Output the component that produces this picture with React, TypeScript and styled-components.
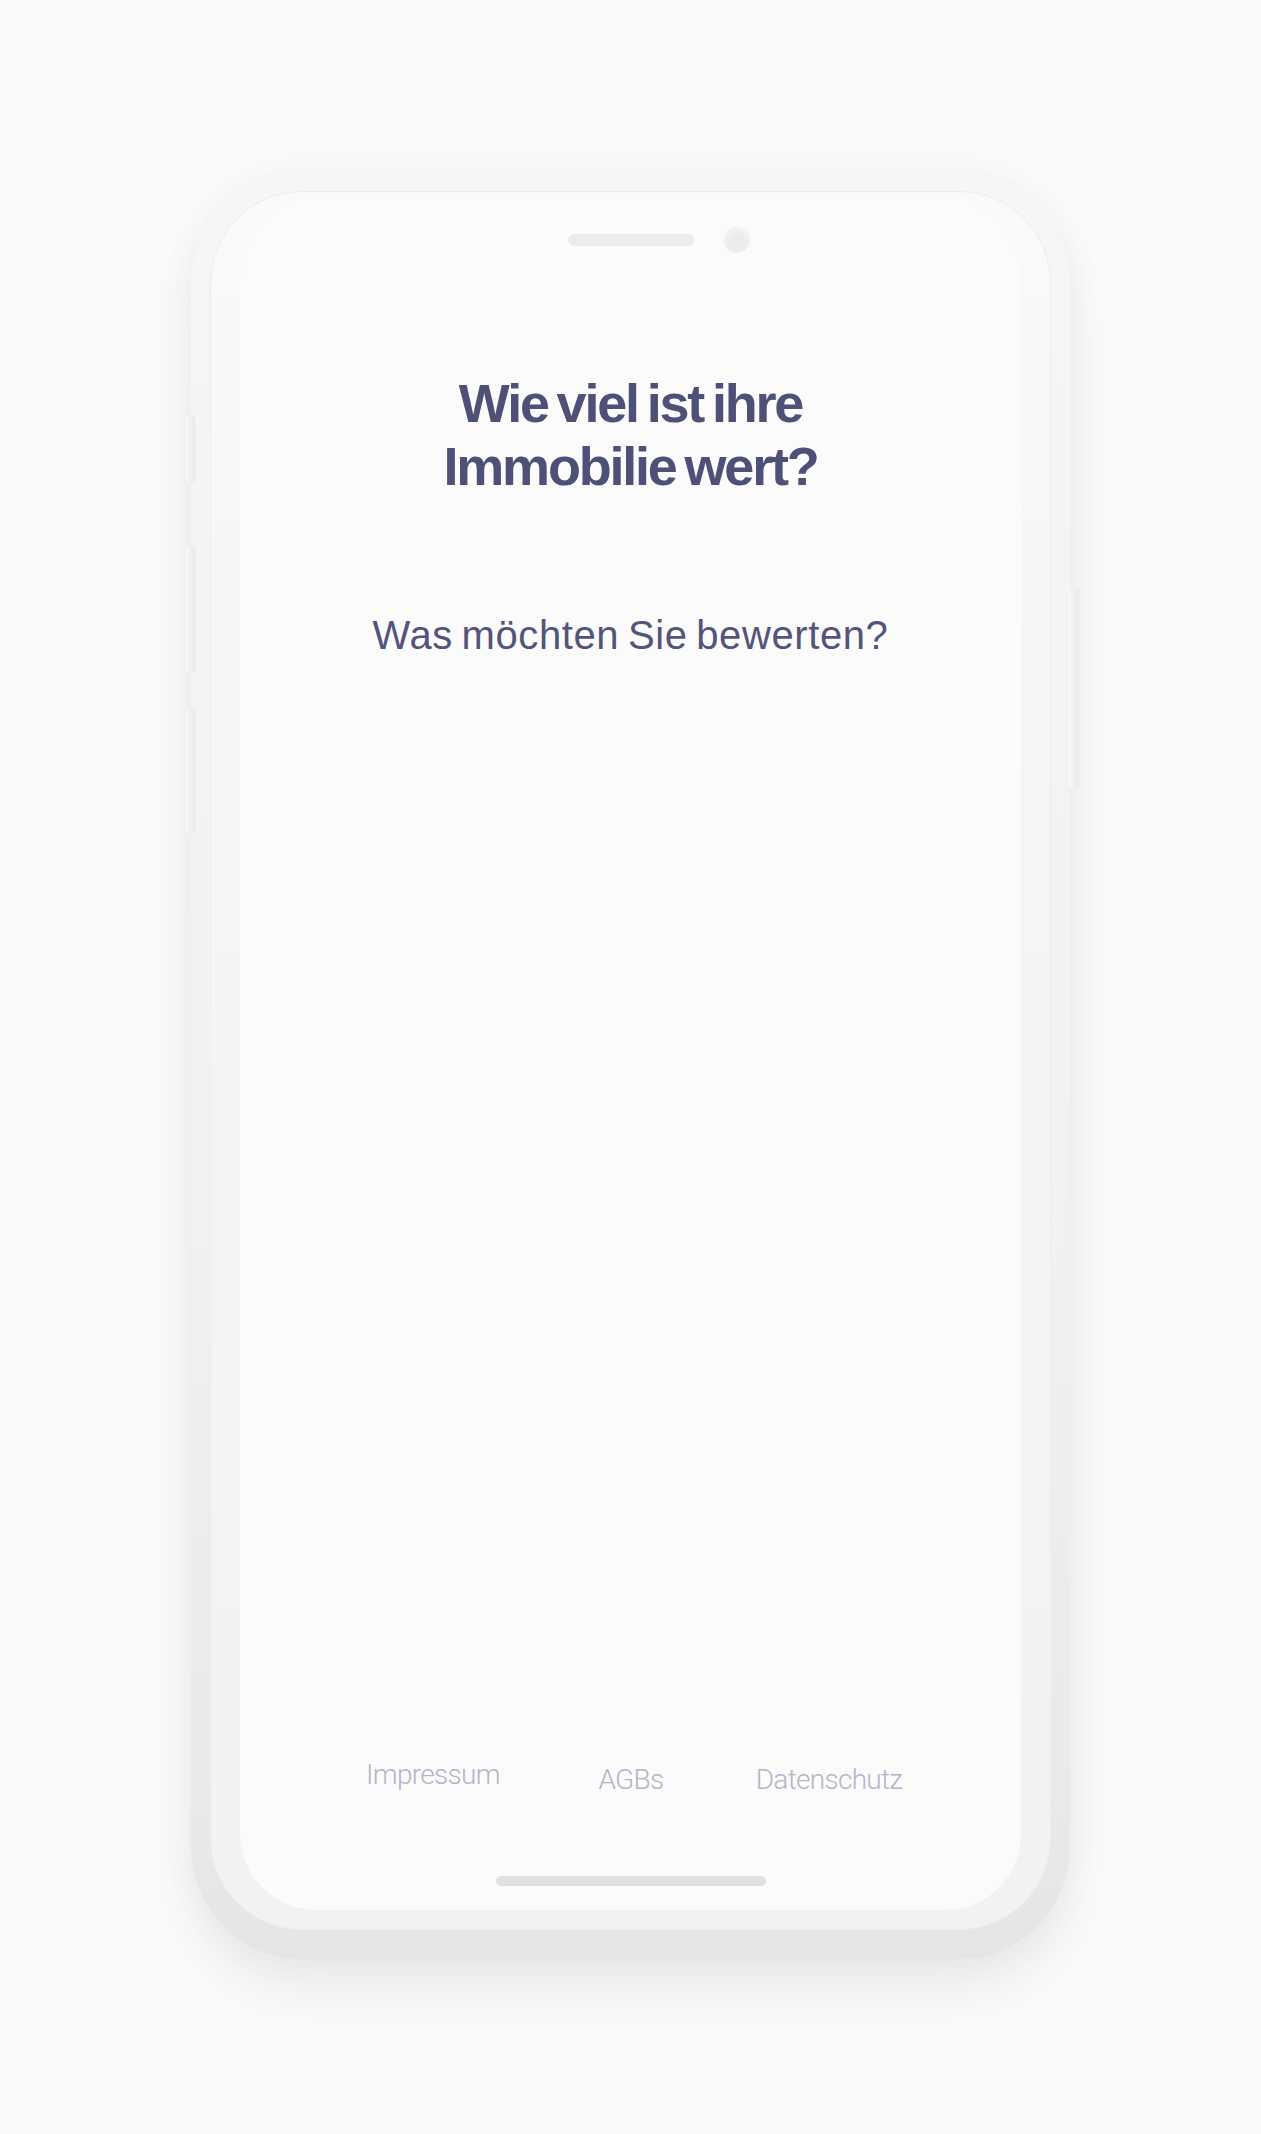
import React from "react";
import styled, { createGlobalStyle } from "styled-components";

const GlobalStyle = createGlobalStyle`
  html, body {
    margin: 0;
    padding: 0;
    background: #fafafa;
  }
  * {
    box-sizing: border-box;
  }
`;

const links = ["Impressum", "AGBs", "Datenschutz"];

const App: React.FC = () => {
  return (
    <Page>
      <GlobalStyle />
      <Phone>
        <SideButton $side="left" $top={243} $height={67} />
        <SideButton $side="left" $top={374} $height={125} />
        <SideButton $side="left" $top={535} $height={125} />
        <SideButton $side="right" $top={416} $height={199} />
        <Face>
          <Screen>
            <TopBar>
              <Speaker />
              <Camera />
            </TopBar>
            <Headline>
              Wie viel ist ihre
              <br />
              Immobilie wert?
            </Headline>
            <Question>Was möchten Sie bewerten?</Question>
            <Spacer />
            <Footer>
              {links.map((l, i) => (
                <FooterLink key={l} href="#" $raise={i === 0}>
                  {l}
                </FooterLink>
              ))}
            </Footer>
            <HomeIndicator />
          </Screen>
        </Face>
      </Phone>
    </Page>
  );
};

export default App;

const Page = styled.div`
  min-height: 2134px;
  padding-top: 173px;
  background: #fafafa;
  font-family: "Liberation Sans", Arial, sans-serif;
`;

const Phone = styled.div`
  position: relative;
  width: 879px;
  height: 1787px;
  margin: 0 auto;
  padding: 18px 19px 30px;
  border-radius: 112px;
  background: linear-gradient(180deg, #f6f6f6 0%, #f1f1f1 60%, #e9e9e9 92%, #e5e5e5 100%);
  box-shadow: 0 30px 50px rgba(0, 0, 0, 0.06), 0 0 40px rgba(0, 0, 0, 0.035);
  display: flex;
`;

const SideButton = styled.div<{ $side: "left" | "right"; $top: number; $height: number }>`
  position: absolute;
  top: ${(p) => p.$top}px;
  ${(p) => (p.$side === "left" ? "left: -6px;" : "right: -9px;")}
  width: ${(p) => (p.$side === "left" ? 10 : 11)}px;
  height: ${(p) => p.$height}px;
  border-radius: 3px;
  background: linear-gradient(90deg, #f8f8f8, #e9e9e9);
  box-shadow: 0 0 2px rgba(0, 0, 0, 0.07);
`;

const Face = styled.div`
  flex: 1;
  display: flex;
  padding: 1px 29px 19px;
  border-radius: 92px;
  border: 1px solid #ededed;
  background: linear-gradient(180deg, #fafafa 0%, #f6f6f6 25%, #f2f2f2 100%);
`;

const Screen = styled.div`
  flex: 1;
  display: flex;
  flex-direction: column;
  align-items: center;
  padding: 34px 0 24px;
  border-radius: 88px 88px 76px 76px;
  background: #fbfbfb;
`;

const TopBar = styled.div`
  width: 100%;
  display: grid;
  grid-template-columns: 1fr auto 1fr;
  align-items: center;
  height: 26px;
`;

const Speaker = styled.div`
  grid-column: 2;
  width: 126px;
  height: 12px;
  border-radius: 6px;
  background: #ebebeb;
`;

const Camera = styled.div`
  grid-column: 3;
  justify-self: start;
  margin-left: 30px;
  width: 26px;
  height: 26px;
  border-radius: 50%;
  background: radial-gradient(circle at 50% 60%, #ededed 0%, #ececec 45%, #f3f3f3 70%);
  border: 1px solid #eeeeee;
`;

const Headline = styled.h1`
  margin: 119px 0 0;
  font-family: "Liberation Sans", Arial, sans-serif;
  font-weight: 700;
  font-size: 54px;
  line-height: 63px;
  letter-spacing: -2.2px;
  word-spacing: -4px;
  color: #4f5078;
  text-align: center;
`;

const Question = styled.p`
  margin: 113px 0 0;
  font-family: "Liberation Sans", Arial, sans-serif;
  font-weight: 400;
  font-size: 40px;
  line-height: 48px;
  letter-spacing: 0.6px;
  word-spacing: -3px;
  color: #525479;
  text-align: center;
`;

const Spacer = styled.div`
  flex: 1;
`;

const Footer = styled.nav`
  display: grid;
  grid-template-columns: repeat(3, 198px);
  justify-content: center;
  justify-items: center;
  margin-left: 1px;
`;

const FooterLink = styled.a<{ $raise?: boolean }>`
  font-family: Roboto, "Liberation Sans", sans-serif;
  font-weight: 300;
  font-size: 28px;
  line-height: 34px;
  letter-spacing: -0.7px;
  color: #b4b4c9;
  text-decoration: none;
  transform: translateY(${(p) => (p.$raise ? -5 : 0)}px);
`;

const HomeIndicator = styled.div`
  margin-top: 79px;
  width: 270px;
  height: 10px;
  border-radius: 5px;
  background: #e0e0e0;
`;
